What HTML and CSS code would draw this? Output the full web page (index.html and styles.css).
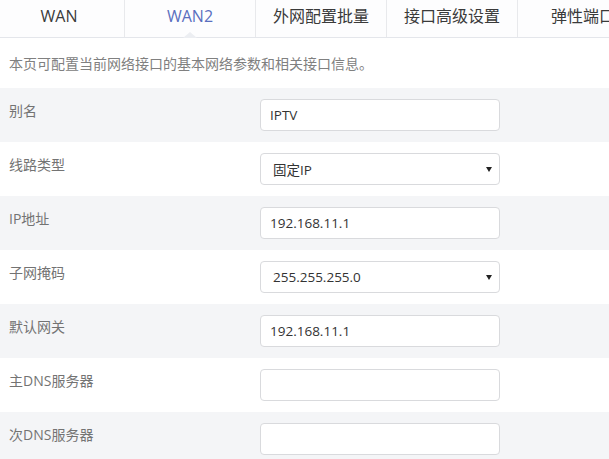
FILE: index.html
```html
<!DOCTYPE html>
<html lang="zh-CN">
<head>
<meta charset="utf-8">
<title>WAN2</title>
<link rel="stylesheet" href="styles.css">
</head>
<body>
<div class="page">
  <nav class="tabs">
    <div class="tab">WAN</div>
    <div class="tab active">WAN2<span class="notch"></span></div>
    <div class="tab">外网配置批量</div>
    <div class="tab">接口高级设置</div>
    <div class="tab">弹性端口</div>
  </nav>
  <p class="desc">本页可配置当前网络接口的基本网络参数和相关接口信息。</p>
  <div class="form">
    <div class="row alt">
      <label class="label">别名</label>
      <div class="field"><input class="input" type="text" value="IPTV"></div>
    </div>
    <div class="row">
      <label class="label">线路类型</label>
      <div class="field"><div class="select"><span>固定IP</span><span class="arrow"></span></div></div>
    </div>
    <div class="row alt">
      <label class="label">IP地址</label>
      <div class="field"><input class="input" type="text" value="192.168.11.1"></div>
    </div>
    <div class="row">
      <label class="label">子网掩码</label>
      <div class="field"><div class="select"><span>255.255.255.0</span><span class="arrow"></span></div></div>
    </div>
    <div class="row alt">
      <label class="label">默认网关</label>
      <div class="field"><input class="input" type="text" value="192.168.11.1"></div>
    </div>
    <div class="row">
      <label class="label">主DNS服务器</label>
      <div class="field"><input class="input" type="text" value=""></div>
    </div>
    <div class="row alt">
      <label class="label">次DNS服务器</label>
      <div class="field"><input class="input" type="text" value=""></div>
    </div>
  </div>
</div>
</body>
</html>
```
FILE: styles.css
```css
html, body {
  margin: 0;
  padding: 0;
  background: #ffffff;
}
body {
  font-family: "Open Sans", "Noto Sans CJK SC", sans-serif;
  color: #333;
  overflow: hidden;
}
.page {
  width: 609px;
  overflow: hidden;
}
.tabs {
  display: flex;
  height: 37px;
  margin-left: -6px;
  border-bottom: 1px solid #e4e6eb;
  background: #fdfdfe;
}
.tab {
  position: relative;
  flex: 0 0 131px;
  box-sizing: border-box;
  border-right: 1px solid #e8e9ec;
  text-align: center;
  font-family: "Open Sans", "Noto Sans CJK SC", sans-serif;
  font-size: 16px;
  line-height: 33px;
  color: #3a3a3a;
}
.tab.active {
  color: #5a6fbf;
}
.notch {
  position: absolute;
  left: 50%;
  bottom: -1px;
  margin-left: -7px;
  width: 0;
  height: 0;
  border-left: 7px solid transparent;
  border-right: 7px solid transparent;
  border-bottom: 6px solid #eceef2;
}
.desc {
  margin: 0;
  height: 50px;
  padding-left: 9px;
  font-family: "Noto Sans CJK SC", sans-serif;
  font-size: 14px;
  line-height: 50px;
  color: #808080;
}
.row {
  display: flex;
  height: 54px;
  box-sizing: border-box;
  background: #fff;
}
.row.alt {
  background: #f4f5f7;
}
.label {
  box-sizing: border-box;
  width: 260px;
  padding: 13px 0 0 9px;
  font-family: "Open Sans", "Noto Sans CJK SC", sans-serif;
  font-size: 14px;
  line-height: 20px;
  color: #737373;
}
.field {
  display: flex;
  align-items: center;
}
.input, .select {
  box-sizing: border-box;
  width: 240px;
  height: 32px;
  border: 1px solid #d9dadd;
  border-radius: 4px;
  background: #fff;
  font-family: "Open Sans", "Noto Sans CJK SC", sans-serif;
  font-size: 13.5px;
  color: #333;
  outline: none;
}
.input {
  padding: 0 9px;
}
.select {
  display: flex;
  align-items: center;
  justify-content: space-between;
  padding: 0 7px 0 12px;
}
.arrow {
  width: 0;
  height: 0;
  border-left: 3px solid transparent;
  border-right: 3px solid transparent;
  border-top: 5px solid #222;
  margin-top: 1px;
}
```
